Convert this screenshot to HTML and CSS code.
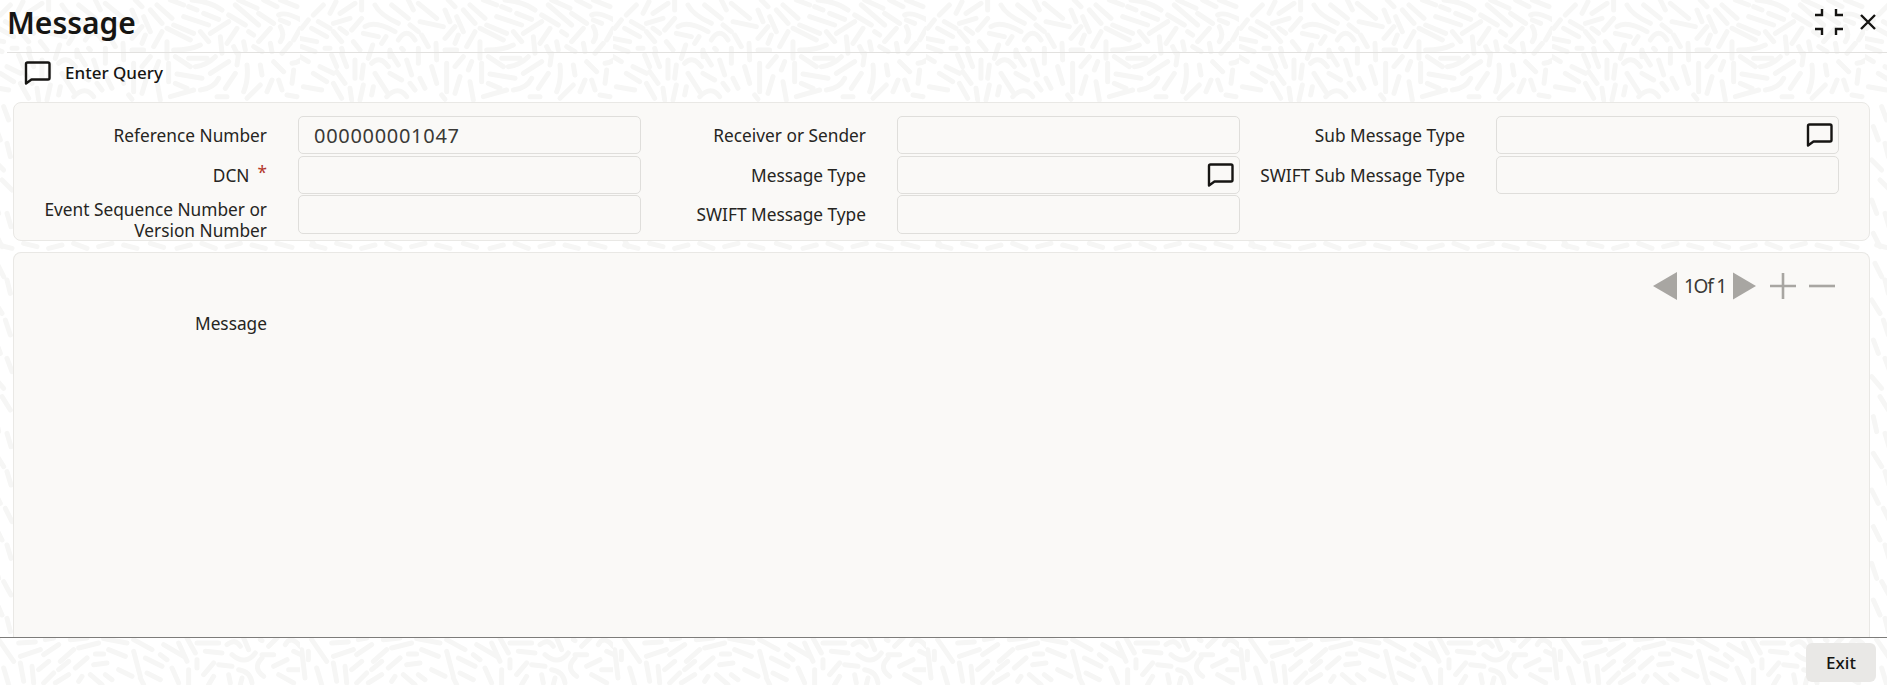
FILE: index.html
```html
<!DOCTYPE html>
<html lang="en">
<head>
<meta charset="utf-8">
<title>Message</title>
<link rel="stylesheet" href="styles.css">
</head>
<body>
<svg class="bg-pattern" aria-hidden="true">
  <defs>
    <pattern id="rice" x="300" y="0" width="313" height="685" patternUnits="userSpaceOnUse">
      <g class="rice" transform="scale(0.33333)">
        <path d="M40 45L70 15M90 40L108 5M120 40L165 10M185 30V0M225 15Q240 45 295 70M275 15L325 55M325 0L340 30M355 10L410 55M435 30L450 65M490 30L525 70M510 15L555 55M445 0L465 20M550 0L590 15M605 20L630 30M615 0Q670 5 705 30M650 40L695 58M755 0L810 25M745 15L815 75M725 45L775 75M830 0L870 20M815 40L860 70M880 0L930 20M875 45Q900 30 975 80M880 60L905 70"/>
        <path d="M5 85L25 60M55 65L90 85M100 70L150 55M155 90L185 55M195 80Q225 60 285 95M35 85L80 110M0 115L50 125M100 95L125 125M120 85L140 100M160 125L180 150M190 100L235 110M245 130L258 110M295 120Q320 80 345 120M330 75L355 95M365 105L385 140M360 65L430 80M470 50L490 95M435 115L465 80M465 130L475 105M500 140L525 95M540 85L610 120M560 75L620 100M590 50L665 75M640 95L665 125M670 100L725 65M720 130L750 85M785 95L800 105M815 125L850 85M880 125Q895 105 880 80M920 120L940 85M955 95L965 130"/>
        <path d="M5 140L45 155M75 145L90 145M125 145L128 155M205 175L218 135M270 150V170M305 145L310 150M355 145V190M408 130L410 180M435 150L470 150M540 125V175M560 150Q610 150 640 135M700 110L705 160M770 125L775 150M740 140L750 160M800 140L825 155M850 130L855 155M885 160L910 130"/>
        <path d="M0 170L25 185M95 165L110 200M125 160L140 200M60 200L100 220M40 220L80 245M110 215L135 250M165 180V235M190 195L185 235M215 190Q240 165 265 200M270 155L295 195M320 180L335 225M395 200L410 250M440 190V275M270 220L305 240M225 220L260 275M330 250L345 270M360 235L375 265M480 230L465 280M490 170L465 200M515 185L505 210M545 190V245M565 170L610 200M605 175H660M625 200Q660 195 685 170M670 220L725 185M570 222L645 235M565 250L600 265M640 270Q680 265 695 235M745 220L715 265M780 195Q785 240 770 275M755 160L750 195M820 195L825 225M860 185L890 215M915 190Q945 185 955 165M920 210L915 250"/>
        <path d="M875 240L885 270M840 275L855 240M780 295L820 255M100 250L125 295M150 265L155 300M190 255L180 300M220 260L215 285M260 290Q295 255 320 290M10 260L65 270M510 245L520 300M550 290L620 270M425 285L435 298M690 290L720 290M900 285L930 290"/>
        <path d="M50 320L65 360M25 380L40 420M60 430L70 470M20 480L50 510M45 540L75 570M20 600L35 640M60 640L72 680M25 700L45 740"/>
        <path d="M35 735L75 745M110 730L150 740M185 745L225 735M260 730L300 745M335 740L375 730M410 735L450 745M490 730L530 742M570 745L610 735M645 730L685 745M720 740L760 730M795 735L835 745M870 730L915 742"/>
        <path d="M30 790L50 830M60 840L70 880M20 900L45 940M55 960L70 1005M25 1020L40 1060M60 1075L75 1115M20 1130L50 1165M45 1190L70 1230M25 1250L35 1295M60 1300L72 1340M25 1360L50 1400M60 1415L72 1455M20 1470L40 1510M55 1525L75 1565M25 1580L45 1620M60 1635L72 1675M20 1690L35 1735M50 1745L72 1785M25 1800L45 1845M60 1855L70 1895"/>
        <g transform="translate(0 1914)">
          <path d="M95 15L145 12M175 5L200 0M250 5L300 0M350 2L420 15M440 5L495 35M530 20L590 55M600 0L625 45M630 15H695M720 20Q745 0 760 25M770 0L785 35M820 5L825 8M845 25L870 0M895 20Q910 -10 940 25"/>
          <path d="M35 5L80 70M100 55L160 35M170 50L215 20M220 70L260 35M275 30L335 15M325 48H350M365 35L415 55M440 40L460 115M475 60L525 85M520 50L540 65M655 40L705 45M735 50Q775 85 805 45M825 50H860M920 40L965 60"/>
          <path d="M5 35L15 120M25 40V65M100 75L110 130M135 85L140 135M155 95L185 70M215 95L245 70M265 90L300 60M320 80L360 75M480 105L520 125M395 95L435 115M630 65V90M650 110L680 75M695 80L735 85M755 95Q790 100 795 135M830 115Q795 90 825 60M860 85L900 65M905 95H945M960 90L985 50M575 15L600 70"/>
          <path d="M50 90L65 140M170 135L200 105M205 135L245 110M275 130L285 115M310 110L345 140M355 110L375 125M460 120L470 140M555 90L575 135M605 95V140M680 115L665 140M725 110L730 135M765 120L760 140M875 110L920 135"/>
        </g>
      </g>
    </pattern>
  </defs>
  <rect width="100%" height="100%" fill="url(#rice)"/>
</svg>

<div class="page">
  <header class="title-bar">
    <h1 class="title">Message</h1>
    <div class="win-actions">
      <svg class="icon-collapse" width="30" height="28" viewBox="0 0 30 28"><path d="M8 1v6H1M22 1v6h7M8 27v-6H1M22 27v-6h7"/></svg>
      <svg class="icon-close" width="18" height="18" viewBox="0 0 18 18"><path d="M2 2l14 14M16 2L2 16"/></svg>
    </div>
  </header>

  <div class="toolbar">
    <svg class="icon-chat" width="27" height="24" viewBox="0 0 27 24"><path d="M2 22.500V3Q2 1.500 3.500 1.500H24Q25.500 1.500 25.500 3V17Q25.500 18.500 24 18.500H7.500Z"/></svg>
    <span class="toolbar-label">Enter Query</span>
  </div>

  <section class="panel panel-fields">
    <div class="field-grid">
      <div class="field">
        <label class="field-label">Reference Number</label>
        <div class="input"><span class="input-value">000000001047</span></div>
      </div>
      <div class="field">
        <label class="field-label">Receiver or Sender</label>
        <div class="input"></div>
      </div>
      <div class="field">
        <label class="field-label">Sub Message Type</label>
        <div class="input">
          <svg class="icon-chat" width="27" height="24" viewBox="0 0 27 24"><path d="M2 22.500V3Q2 1.500 3.500 1.500H24Q25.500 1.500 25.500 3V17Q25.500 18.500 24 18.500H7.500Z"/></svg>
        </div>
      </div>

      <div class="field">
        <label class="field-label">DCN<span class="required">*</span></label>
        <div class="input"></div>
      </div>
      <div class="field">
        <label class="field-label">Message Type</label>
        <div class="input">
          <svg class="icon-chat" width="27" height="24" viewBox="0 0 27 24"><path d="M2 22.500V3Q2 1.500 3.500 1.500H24Q25.500 1.500 25.500 3V17Q25.500 18.500 24 18.500H7.500Z"/></svg>
        </div>
      </div>
      <div class="field">
        <label class="field-label">SWIFT Sub Message Type</label>
        <div class="input"></div>
      </div>

      <div class="field field-tall">
        <label class="field-label label-wrapped">Event Sequence Number or Version Number</label>
        <div class="input"></div>
      </div>
      <div class="field field-tall">
        <label class="field-label">SWIFT Message Type</label>
        <div class="input"></div>
      </div>
    </div>
  </section>

  <main class="message-area">
    <section class="panel panel-message">
      <div class="pager">
        <svg class="pager-arrow" width="24" height="28" viewBox="0 0 24 28"><path d="M24 0V28L0 14Z"/></svg>
        <span class="pager-text">1Of 1</span>
        <svg class="pager-arrow" width="23" height="28" viewBox="0 0 24 28"><path d="M0 0V28L24 14Z"/></svg>
        <svg class="pager-op pager-plus" width="26" height="26" viewBox="0 0 26 26"><path d="M13 0V26M0 13H26"/></svg>
        <svg class="pager-op" width="26" height="26" viewBox="0 0 26 26"><path d="M0 13H26"/></svg>
      </div>
      <div class="message-row">
        <label class="field-label">Message</label>
      </div>
    </section>
  </main>

  <footer class="footer">
    <button class="btn-exit" type="button">Exit</button>
  </footer>
</div>
</body>
</html>
```
FILE: styles.css
```css
* { box-sizing: border-box; }

html, body {
  margin: 0;
  height: 100%;
  overflow: hidden;
  background: #fff;
  font-family: "Noto Sans", "Open Sans", sans-serif;
  color: #161513;
}

.bg-pattern {
  position: absolute;
  inset: 0;
  width: 100%;
  height: 100%;
}

.rice path {
  fill: none;
  stroke: #f6f6f5;
  stroke-width: 15;
  stroke-linecap: round;
}

.page {
  position: relative;
  display: flex;
  flex-direction: column;
  height: 685px;
  overflow: hidden;
}

.title-bar {
  display: flex;
  justify-content: space-between;
  height: 53px;
  margin-left: 7px;
  border-bottom: 1px solid #e2e1df;
}

.title {
  margin: 0;
  font-size: 30px;
  font-weight: 600;
  line-height: 45px;
}

.win-actions {
  display: flex;
  align-items: flex-start;
  gap: 15px;
  padding: 8px 10px 0 0;
}

.icon-collapse path, .icon-close path {
  fill: none;
  stroke: #161513;
  stroke-width: 2.4;
}

.icon-close { margin-top: 5px; }

.toolbar {
  display: flex;
  align-items: center;
  gap: 14px;
  height: 39px;
  padding-left: 24px;
}

.toolbar-label {
  font-size: 17px;
  font-weight: 500;
}

.icon-chat path {
  fill: none;
  stroke: #161513;
  stroke-width: 2.4;
  stroke-linejoin: round;
}

.panel {
  margin: 0 17px 0 13px;
  background: #faf9f7;
  border: 1px solid #e9e8e5;
  border-radius: 8px;
}

.panel-fields {
  margin-top: 10px;
  height: 139px;
  padding: 13px 0 0 28px;
}

.field-grid {
  display: grid;
  grid-template-columns: repeat(3, 599px);
  grid-template-rows: 40px 39px 39px;
}

.field {
  display: flex;
  align-items: center;
  gap: 31px;
  height: 38px;
}

.field-tall { height: 39px; }

.field-label {
  width: 225px;
  flex: none;
  text-align: right;
  font-size: 17.3px;
  line-height: 21px;
  color: #262522;
}

.label-wrapped { margin-top: 10px; }

.required {
  color: #b3372b;
  margin-left: 8px;
  line-height: 0;
  vertical-align: 3px;
}

.input {
  display: flex;
  align-items: center;
  justify-content: flex-end;
  width: 344px;
  height: 100%;
  padding: 0 5px 0 15px;
  border: 1px solid #dfdedb;
  border-radius: 5px;
  background: #faf9f7;
}

.input-value {
  flex: 1;
  font-size: 20px;
  letter-spacing: 0.7px;
  color: #3a3936;
}

.message-area {
  flex: 1;
  min-height: 0;
  display: flex;
  flex-direction: column;
  padding-top: 11px;
}

.panel-message {
  flex: 1;
  padding-top: 19px;
  border-bottom: 0;
  border-radius: 8px 8px 0 0;
}

.pager {
  display: flex;
  align-items: center;
  justify-content: flex-end;
  height: 28px;
  padding-right: 34px;
}

.pager-arrow path { fill: #a8a6a2; }

.pager-text {
  margin: 0 7px;
  font-size: 19px;
  letter-spacing: -1.2px;
  color: #3a3936;
}

.pager-op path {
  fill: none;
  stroke: #a8a6a2;
  stroke-width: 2.6;
}

.pager-plus { margin: 0 13px 0 14px; }

.message-row {
  display: flex;
  padding-left: 28px;
  margin-top: 13px;
}

.footer {
  display: flex;
  justify-content: flex-end;
  align-items: flex-start;
  flex: none;
  height: 48px;
  padding: 5px 11px 0 0;
  border-top: 1px solid #7d7c7a;
}

.btn-exit {
  width: 70px;
  height: 39px;
  border: 0;
  border-radius: 6px;
  background: #e9e8e6;
  font-family: inherit;
  font-size: 17px;
  font-weight: 500;
  color: #161513;
}
```
